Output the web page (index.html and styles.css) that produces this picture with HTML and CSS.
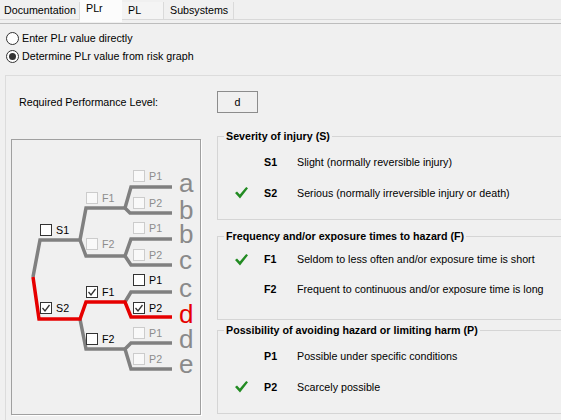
FILE: index.html
```html
<!DOCTYPE html>
<html lang="en">
<head>
    <meta charset="UTF-8">
    <meta name="viewport" content="width=device-width, initial-scale=1.0">
    <title>PLr</title>
    <link rel="stylesheet" href="styles.css">
</head>
<body>

    <div class="tabs">
        <div class="tab tab-doc">Documentation</div>
        <div class="tab tab-active">PLr</div>
        <div class="tab tab-pl">PL</div>
        <div class="tab tab-sub">Subsystems</div>
    </div>

    <div class="page">
        <div class="modes">
            <label class="radio"><span class="dot"></span>Enter PLr value directly</label>
            <label class="radio"><span class="dot on"></span>Determine PLr value from risk graph</label>
        </div>

        <div class="group">
            <div class="req">
                <span class="req-label">Required Performance Level:</span>
                <span class="req-value">d</span>
            </div>

            <div class="content">
                <div class="graph">
                    <svg width="188" height="274" viewBox="0 0 188 274">
                        <g class="line">
                            <path d="M21 137 L28 100 L68 100"/>
                            <path d="M68 100 L74 68 L113 68"/>
                            <path d="M113 68 L119 47 L160 47"/>
                            <path d="M113 68 L118 73 L160 73"/>
                            <path d="M68 100 L74 116 L113 116"/>
                            <path d="M113 116 L119 99 L160 99"/>
                            <path d="M113 116 L119 125 L160 125"/>
                            <path d="M113 162 L119 152 L160 152"/>
                            <path d="M68 179 L74 209 L113 209"/>
                            <path d="M113 209 L119 203 L160 203"/>
                            <path d="M113 209 L119 229 L160 229"/>
                        </g>
                        <path class="line-red" d="M21 137 L27 179 L68 179 L74 162 L113 162 L119 177 L160 177"/>

                        <!-- S -->
                        <rect class="box" x="28.5" y="84.5" width="11" height="11"/>
                        <text class="lbl" x="44" y="94">S1</text>
                        <rect class="box" x="28.5" y="162.5" width="11" height="11"/>
                        <path class="tick" d="M30.5 168 L33 171 L37.5 165"/>
                        <text class="lbl" x="44" y="172">S2</text>

                        <!-- F -->
                        <rect class="box off" x="74.5" y="52.5" width="11" height="11"/>
                        <text class="lbl off" x="90" y="62">F1</text>
                        <rect class="box off" x="74.5" y="98.5" width="11" height="11"/>
                        <text class="lbl off" x="90" y="108">F2</text>
                        <rect class="box" x="74.5" y="146.5" width="11" height="11"/>
                        <path class="tick" d="M76.5 152 L79 155 L83.5 149"/>
                        <text class="lbl" x="90" y="156">F1</text>
                        <rect class="box" x="74.5" y="193.5" width="11" height="11"/>
                        <text class="lbl" x="90" y="203">F2</text>

                        <!-- P -->
                        <rect class="box off" x="121.5" y="30.5" width="11" height="11"/>
                        <text class="lbl off" x="137" y="40">P1</text>
                        <rect class="box off" x="121.5" y="57.5" width="11" height="11"/>
                        <text class="lbl off" x="137" y="67">P2</text>
                        <rect class="box off" x="121.5" y="82.5" width="11" height="11"/>
                        <text class="lbl off" x="137" y="92">P1</text>
                        <rect class="box off" x="121.5" y="109.5" width="11" height="11"/>
                        <text class="lbl off" x="137" y="119">P2</text>
                        <rect class="box" x="121.5" y="134.5" width="11" height="11"/>
                        <text class="lbl" x="137" y="144">P1</text>
                        <rect class="box" x="121.5" y="162.5" width="11" height="11"/>
                        <path class="tick" d="M123.5 168 L126 171 L130.5 165"/>
                        <text class="lbl" x="137" y="172">P2</text>
                        <rect class="box off" x="121.5" y="187.5" width="11" height="11"/>
                        <text class="lbl off" x="137" y="197">P1</text>
                        <rect class="box off" x="121.5" y="213.5" width="11" height="11"/>
                        <text class="lbl off" x="137" y="223">P2</text>

                        <!-- results -->
                        <text class="level" x="167" y="52">a</text>
                        <text class="level" x="167" y="79">b</text>
                        <text class="level" x="167" y="103">b</text>
                        <text class="level" x="167" y="129">c</text>
                        <text class="level" x="167" y="157">c</text>
                        <text class="level red" x="167" y="183">d</text>
                        <text class="level" x="167" y="208">d</text>
                        <text class="level" x="167" y="233">e</text>
                    </svg>
                </div>

                <div class="params">
                    <fieldset class="param">
                        <legend>Severity of injury (S)</legend>
                        <div class="row"><span class="mark"></span><b>S1</b><span>Slight (normally reversible injury)</span></div>
                        <div class="row"><span class="mark"><svg width="13" height="13" viewBox="0 0 13 13"><polygon class="check" points="0,7 2,5.5 4.8,8.6 11.2,1 13,2.2 5,12.5"/></svg></span><b>S2</b><span>Serious (normally irreversible injury or death)</span></div>
                    </fieldset>

                    <fieldset class="param param-f">
                        <legend>Frequency and/or exposure times to hazard (F)</legend>
                        <div class="row"><span class="mark"><svg width="13" height="13" viewBox="0 0 13 13"><polygon class="check" points="0,7 2,5.5 4.8,8.6 11.2,1 13,2.2 5,12.5"/></svg></span><b>F1</b><span>Seldom to less often and/or exposure time is short</span></div>
                        <div class="row"><span class="mark"></span><b>F2</b><span>Frequent to continuous and/or exposure time is long</span></div>
                    </fieldset>

                    <fieldset class="param param-p">
                        <legend>Possibility of avoiding hazard or limiting harm (P)</legend>
                        <div class="row"><span class="mark"></span><b>P1</b><span>Possible under specific conditions</span></div>
                        <div class="row"><span class="mark"><svg width="13" height="13" viewBox="0 0 13 13"><polygon class="check" points="0,7 2,5.5 4.8,8.6 11.2,1 13,2.2 5,12.5"/></svg></span><b>P2</b><span>Scarcely possible</span></div>
                    </fieldset>
                </div>
            </div>
        </div>
    </div>

</body>
</html>
```

FILE: styles.css
```css
body { margin: 0; height: 420px; overflow: hidden; background: #f0f0f0; font-family: "Liberation Sans", Arial, sans-serif; font-size: 10.7px; color: #000; }

.tabs { display: flex; align-items: flex-start; height: 19px; border-bottom: 1px solid #d9d9d9; }
.tab { box-sizing: border-box; height: 17px; margin-top: 2px; line-height: 16px; padding-left: 6px; border-right: 1px solid #dadada; white-space: nowrap; }
.tab-doc { width: 80px; padding-left: 4px; }
.tab-pl { width: 42px; background: #f4f4f4; }
.tab-sub { width: 70px; }
.tab-active { width: 42px; height: 22px; margin-top: 0; line-height: 17px; padding-left: 6px; background: #fcfcfc; border-right: none; }

.page { margin-top: 3px; border-top: 1px solid #bdbdbd; }

.modes { padding: 5px 0 0 6px; }
.radio { display: flex; align-items: center; gap: 3px; height: 18px; }
.dot { box-sizing: border-box; width: 13px; height: 13px; border: 1px solid #333; border-radius: 50%; background: #fff; display: flex; align-items: center; justify-content: center; }
.dot.on::after { content: ""; width: 7px; height: 7px; border-radius: 50%; background: #333; }

.group { margin: 10px 0 0 5px; border: 1px solid #dcdcdc; border-right: none; border-bottom: none; height: 344px; }

.req { display: flex; align-items: center; padding: 15px 0 0 13px; }
.req-label { width: 198px; }
.req-value { width: 39px; height: 20px; line-height: 20px; text-align: center; border: 1px solid #8c8c8c; }

.content { display: flex; align-items: flex-start; margin-top: 16px; }

.graph { width: 188px; height: 274px; margin: 10px 0 0 5px; border: 1px solid #a0a0a0; box-shadow: 1px 1px 0 #fff; }
.graph svg { display: block; }
.line path { fill: none; stroke: #808080; stroke-width: 3.5; }
.line-red { fill: none; stroke: #e60000; stroke-width: 3.5; }
.box { fill: #fff; stroke: #333; stroke-width: 1; }
.box.off { fill: #f9f9f9; stroke: #cccccc; }
.tick { fill: none; stroke: #333; stroke-width: 1.3; }
.lbl { font-family: "Liberation Sans", Arial, sans-serif; font-size: 10.7px; fill: #000; }
.lbl.off { fill: #8d8d8d; }
.level { font-family: "Liberation Sans", Arial, sans-serif; font-size: 26px; fill: #8a8a8a; }
.level.red { fill: #e60000; }

.params { flex: 1; margin-left: 16px; }
.param { margin: 0; padding: 3px 0 11px 6px; min-width: 0; border: 1px solid #d5d5d5; border-right: none; }
.param legend { padding: 0 2px; font-weight: bold; line-height: 14px; }
.param-f { margin-top: 9px; padding-top: 1px; padding-bottom: 15px; }
.param-f .row { height: 30px; }
.param-p { margin-top: 3px; }

.row { display: flex; align-items: center; height: 31px; white-space: nowrap; }
.mark { width: 29px; height: 13px; padding-left: 11px; }
.mark svg { display: block; }
.check { fill: #228b22; }
.row b { width: 33px; }
```
